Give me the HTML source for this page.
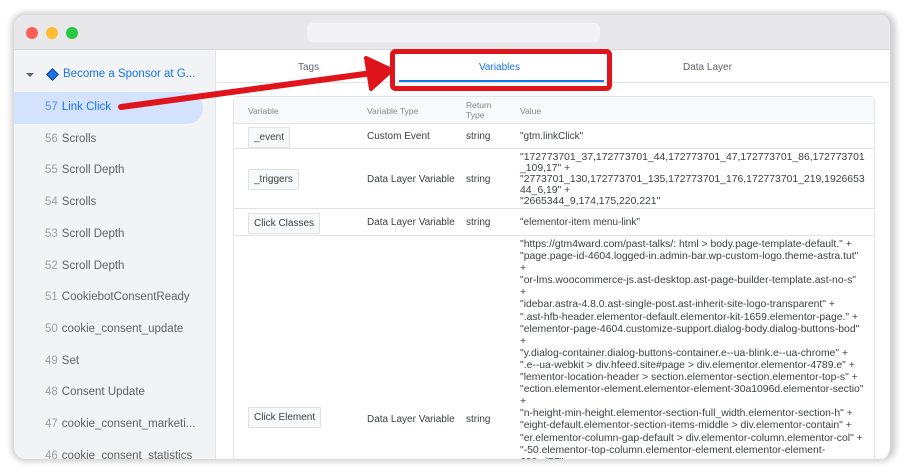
<!DOCTYPE html>
<html><head><meta charset="utf-8">
<style>
*{margin:0;padding:0;box-sizing:border-box}
body{width:906px;height:473px;background:#fff;position:relative;overflow:hidden;font-family:"Liberation Sans",sans-serif}
.win{position:absolute;left:14px;top:15px;width:879px;height:444px;border-radius:12px;background:#fff;box-shadow:0 0 6px 3px rgba(0,0,0,.18);overflow:hidden;border-right:3px solid #d4d4d6}
.title{position:absolute;left:0;top:0;width:100%;height:35px;background:#e8e8eb;border-bottom:1px solid #d6d6d8}
.dot{position:absolute;top:12px;width:12px;height:12px;border-radius:50%}
.url{position:absolute;left:293px;top:8px;width:293px;height:19px;border-radius:5px;background:#f3f3f5}
.side{position:absolute;left:0;top:35px;width:202px;height:420px;background:#f1f3f4;border-right:1px solid #e3e3e3}
.item{position:absolute;left:31px;font-size:11.5px;color:#5f6368;white-space:nowrap}
.item b{font-weight:normal;color:#9aa0a6;margin-right:4px}
.sel{position:absolute;left:0;top:42px;width:189px;height:32px;background:#d3e3fd;border-radius:0 16px 16px 0}
.tabs{position:absolute;left:203px;top:35px;right:0;height:33px;border-bottom:1px solid #e3e3e3}
.tab{position:absolute;top:12px;font-size:10px;color:#5f6368}
.tbl{position:absolute;left:219px;top:81px;width:642px;height:380px;border:1px solid #e3e3e3;border-radius:4px;font-size:10px;color:#3c4043}
.hdr{position:absolute;left:0;top:0;width:100%;height:27px;background:#f8f9fa;border-bottom:1px solid #e3e3e3;color:#80868b;font-size:8.5px}
.row{position:absolute;left:0;width:100%;border-bottom:1px solid #e3e3e3}
.chip{position:absolute;left:14px;padding:4px 5px;border:1px solid #e0e0e0;border-radius:2px;background:#f8f9fa;font-size:10px;white-space:nowrap}
.c{position:absolute;white-space:nowrap}
.val{position:absolute;left:286px;line-height:12.1px;white-space:nowrap;font-size:10.4px}
</style></head><body>
<div class="win">
 <div class="title">
  <div class="dot" style="left:12px;background:#fe5f57"></div>
  <div class="dot" style="left:32px;background:#febc2e"></div>
  <div class="dot" style="left:52px;background:#28c840"></div>
  <div class="url"></div>
 </div>
 <div class="side">
  <div style="position:absolute;left:12px;top:23px;width:0;height:0;border-left:4px solid transparent;border-right:4px solid transparent;border-top:4px solid #5f6368"></div>
  <div style="position:absolute;left:34px;top:20px;width:9px;height:9px;background:#1a73e8;transform:rotate(45deg);border:1px solid #0d3c8a"></div>
  <div style="position:absolute;left:49px;top:18px;font-size:11.5px;color:#1a73e8;white-space:nowrap">Become a Sponsor at G...</div>
  <div class="sel"></div>
  <div class="item" style="top:51px;color:#1a73e8"><b style="color:#5b8ee0">57</b>Link Click</div>
  <div class="item" style="top:83px"><b>56</b>Scrolls</div>
  <div class="item" style="top:114px"><b>55</b>Scroll Depth</div>
  <div class="item" style="top:146px"><b>54</b>Scrolls</div>
  <div class="item" style="top:178px"><b>53</b>Scroll Depth</div>
  <div class="item" style="top:210px"><b>52</b>Scroll Depth</div>
  <div class="item" style="top:241px"><b>51</b>CookiebotConsentReady</div>
  <div class="item" style="top:273px"><b>50</b>cookie_consent_update</div>
  <div class="item" style="top:305px"><b>49</b>Set</div>
  <div class="item" style="top:336px"><b>48</b>Consent Update</div>
  <div class="item" style="top:368px"><b>47</b>cookie_consent_marketi...</div>
  <div class="item" style="top:400px"><b>46</b>cookie_consent_statistics</div>
 </div>
 <div class="tabs">
  <div class="tab" style="left:81px">Tags</div>
  <div class="tab" style="left:262px;color:#1a73e8">Variables</div>
  <div class="tab" style="left:466px">Data Layer</div>
  <div style="position:absolute;left:182px;top:30px;width:205px;height:2px;background:#1a73e8"></div>
 </div>
 <div class="tbl">
  <div class="hdr">
   <div class="c" style="left:14px;top:9px">Variable</div>
   <div class="c" style="left:133px;top:9px">Variable Type</div>
   <div class="c" style="left:232px;top:3px;line-height:10px">Return<br>Type</div>
   <div class="c" style="left:286px;top:9px">Value</div>
  </div>
  <div class="row" style="top:27px;height:25px">
   <div class="chip" style="top:3px">_event</div>
   <div class="c" style="left:133px;top:7px">Custom Event</div>
   <div class="c" style="left:232px;top:7px">string</div>
   <div class="c" style="left:286px;top:7px">"gtm.linkClick"</div>
  </div>
  <div class="row" style="top:52px;height:60px">
   <div class="chip" style="top:20px">_triggers</div>
   <div class="c" style="left:133px;top:25px">Data Layer Variable</div>
   <div class="c" style="left:232px;top:25px">string</div>
   <div class="val" style="top:3px;line-height:11px">"172773701_37,172773701_44,172773701_47,172773701_86,172773701<br>_109,17" +<br>"2773701_130,172773701_135,172773701_176,172773701_219,1926653<br>44_6,19" +<br>"2665344_9,174,175,220,221"</div>
  </div>
  <div class="row" style="top:112px;height:27px">
   <div class="chip" style="top:4px">Click Classes</div>
   <div class="c" style="left:133px;top:8px">Data Layer Variable</div>
   <div class="c" style="left:232px;top:8px">string</div>
   <div class="c" style="left:286px;top:8px">"elementor-item menu-link"</div>
  </div>
  <div class="row" style="top:139px;height:260px;border:none">
   <div class="chip" style="top:171px">Click Element</div>
   <div class="c" style="left:133px;top:178px">Data Layer Variable</div>
   <div class="c" style="left:232px;top:178px">string</div>
   <div class="val" style="top:3px">"https://gtm4ward.com/past-talks/: html &gt; body.page-template-default." +<br>"page.page-id-4604.logged-in.admin-bar.wp-custom-logo.theme-astra.tut"<br>+<br>"or-lms.woocommerce-js.ast-desktop.ast-page-builder-template.ast-no-s"<br>+<br>"idebar.astra-4.8.0.ast-single-post.ast-inherit-site-logo-transparent" +<br>".ast-hfb-header.elementor-default.elementor-kit-1659.elementor-page." +<br>"elementor-page-4604.customize-support.dialog-body.dialog-buttons-bod"<br>+<br>"y.dialog-container.dialog-buttons-container.e--ua-blink.e--ua-chrome" +<br>".e--ua-webkit &gt; div.hfeed.site#page &gt; div.elementor.elementor-4789.e" +<br>"lementor-location-header &gt; section.elementor-section.elementor-top-s" +<br>"ection.elementor-element.elementor-element-30a1096d.elementor-sectio"<br>+<br>"n-height-min-height.elementor-section-full_width.elementor-section-h" +<br>"eight-default.elementor-section-items-middle &gt; div.elementor-contain" +<br>"er.elementor-column-gap-default &gt; div.elementor-column.elementor-col" +<br>"-50.elementor-top-column.elementor-element.elementor-element-<br>638cd57" +<br>"f &gt; div.elementor-widget-wrap.elementor-element-populated &gt; div.elem" +<br>"entor-element.elementor-element-5b650377.elementor-nav-menu__align-</div>
  </div>
 </div>
</div>
<svg style="position:absolute;left:0;top:0" width="906" height="473">
 <rect x="392.5" y="51.5" width="217" height="37" rx="3" fill="none" stroke="#e0141b" stroke-width="5"/>
 <line x1="121" y1="107" x2="372" y2="73" stroke="#e0141b" stroke-width="6" stroke-linecap="round"/>
 <polygon points="366,58 392,70 371,89" fill="#e0141b" stroke="#e0141b" stroke-width="4" stroke-linejoin="round"/>
</svg>
</body></html>
